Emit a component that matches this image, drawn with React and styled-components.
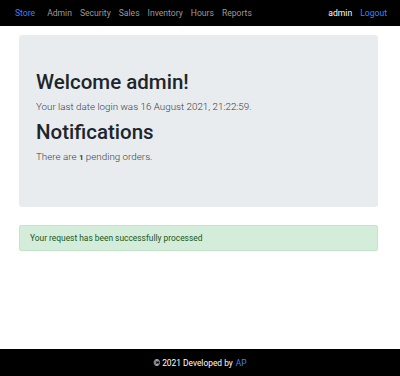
import React from "react";
import styled, { createGlobalStyle } from "styled-components";

const GlobalStyle = createGlobalStyle`
  html, body {
    margin: 0;
    padding: 0;
    background: #fff;
    font-family: Roboto, "Liberation Sans", sans-serif;
  }
`;

const Page = styled.div`
  display: flex;
  flex-direction: column;
  min-height: 376px;
`;

const Navbar = styled.nav`
  display: flex;
  align-items: center;
  height: 26px;
  background: #000;
  padding: 0 9px 0 15px;
  font-size: 8.6px;
`;

const Brand = styled.a`
  color: #3b82f6;
  margin-right: 8px;
  text-decoration: none;
`;

const NavList = styled.div`
  display: flex;
  flex: 1;
`;

const NavLink = styled.a`
  color: ${(props) => (props.active ? "#fff" : props.blue ? "#3b82f6" : "#9a9a9a")};
  padding: 0 4px;
  text-decoration: none;
`;

const Main = styled.main`
  flex: 1;
  padding: 9px 22px 0 19px;
`;

const Jumbotron = styled.section`
  background: #e9ecef;
  border-radius: 3px;
  height: 172px;
  box-sizing: border-box;
  padding: 35px 17px 0;
`;

const Title = styled.h1`
  margin: 0;
  font-size: 20.5px;
  font-weight: 500;
  color: #212529;
  line-height: 24px;
`;

const Lead = styled.p`
  margin: 5px 0 5px;
  font-size: 9.8px;
  font-weight: 300;
  color: #3a3d40;
  line-height: 16px;
`;

const Count = styled.b`
  font-size: 8px;
  font-weight: 700;
`;

const Alert = styled.div`
  margin-top: 18px;
  background: #d4edda;
  border: 1px solid #c3e6cb;
  border-radius: 2px;
  color: #155724;
  font-size: 8.4px;
  height: 26px;
  box-sizing: border-box;
  display: flex;
  align-items: center;
  padding: 0 10px;
`;

const Footer = styled.footer`
  background: #000;
  color: #fff;
  height: 27px;
  display: flex;
  align-items: center;
  justify-content: center;
  font-size: 8.4px;
`;

const FooterLink = styled.a`
  color: #3b82f6;
  margin-left: 3px;
  text-decoration: none;
`;

export default function App() {
  return (
    <Page>
      <GlobalStyle />
      <Navbar>
        <Brand href="#">Store</Brand>
        <NavList>
          <NavLink href="#">Admin</NavLink>
          <NavLink href="#">Security</NavLink>
          <NavLink href="#">Sales</NavLink>
          <NavLink href="#">Inventory</NavLink>
          <NavLink href="#">Hours</NavLink>
          <NavLink href="#">Reports</NavLink>
        </NavList>
        <NavLink active>admin</NavLink>
        <NavLink blue href="#">Logout</NavLink>
      </Navbar>
      <Main>
        <Jumbotron>
          <Title>Welcome admin!</Title>
          <Lead>Your last date login was 16 August 2021, 21:22:59.</Lead>
          <Title>Notifications</Title>
          <Lead>
            There are <Count>1</Count> pending orders.
          </Lead>
        </Jumbotron>
        <Alert>Your request has been successfully processed</Alert>
      </Main>
      <Footer>
        © 2021 Developed by<FooterLink href="#">AP</FooterLink>
      </Footer>
    </Page>
  );
}
